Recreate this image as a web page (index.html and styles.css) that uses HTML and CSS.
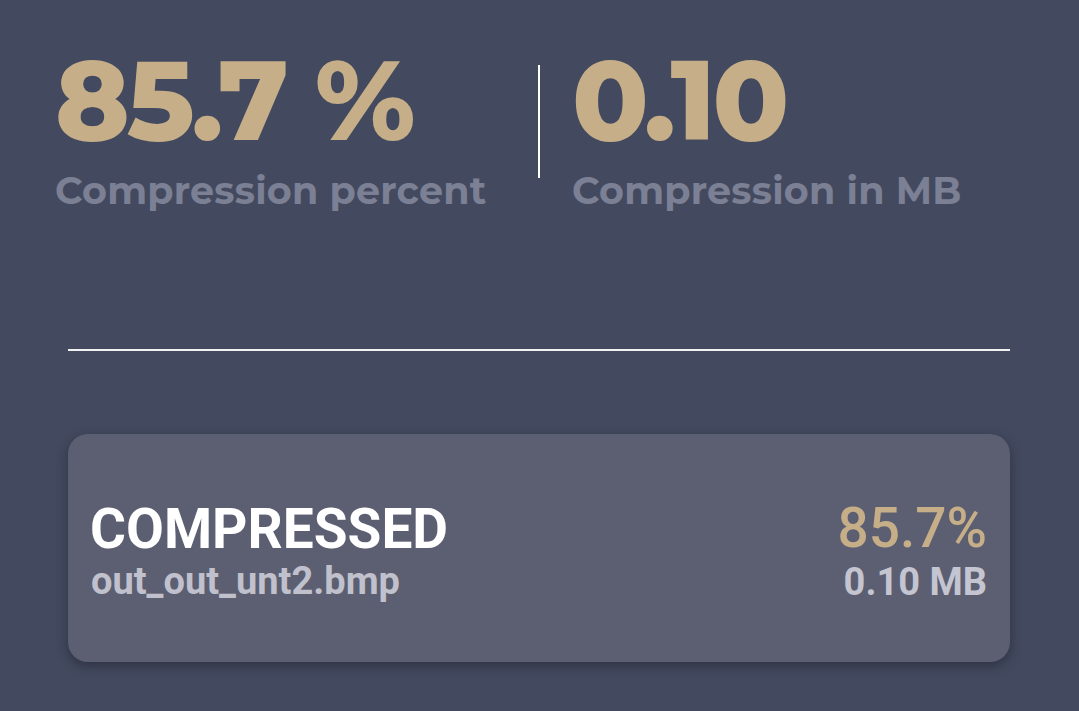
FILE: index.html
```html
<!DOCTYPE html>
<html lang="en">
<head>
<meta charset="utf-8">
<title>Compression result</title>
<link rel="stylesheet" href="styles.css">
</head>
<body>
<main class="page">
  <section class="stats">
    <div class="stat stat-first">
      <div class="stat-value">85.7 %</div>
      <div class="stat-label">Compression percent</div>
    </div>
    <div class="stat-divider"></div>
    <div class="stat stat-second">
      <div class="stat-value">0.10</div>
      <div class="stat-label">Compression in MB</div>
    </div>
  </section>
  <section class="results">
    <hr class="rule">
    <div class="card">
      <div class="card-left">
        <div class="card-title">COMPRESSED</div>
        <div class="card-file">out_out_unt2.bmp</div>
      </div>
      <div class="card-right">
        <div class="card-percent">85.7%</div>
        <div class="card-size">0.10 MB</div>
      </div>
    </div>
  </section>
</main>
</body>
</html>
```

FILE: styles.css
```css
html, body {
  margin: 0;
  padding: 0;
}
body {
  background: #434a5f;
  width: 1079px;
  height: 711px;
  overflow: hidden;
}
.page {
  display: flex;
  flex-direction: column;
}
.stats {
  display: flex;
  align-items: flex-start;
  padding: 42px 0 0 55px;
  font-family: "Montserrat", Inter, "Noto Sans", sans-serif;
}
.stat-first {
  width: 483px;
}
.stat-second {
  padding-left: 32px;
}
.stat-value {
  color: #c6ae88;
  font-size: 112px;
  font-weight: 800;
  line-height: 116px;
  letter-spacing: -3.2px;
}
.stat-label {
  color: #7c8094;
  font-size: 38px;
  font-weight: 700;
  line-height: 44px;
  letter-spacing: 0.25px;
  margin-top: 11px;
}
.stat-divider {
  width: 2px;
  height: 113px;
  margin-top: 23px;
  background: #ffffff;
}
.results {
  padding: 0 69px 0 68px;
  font-family: Roboto, "Liberation Sans", sans-serif;
}
.rule {
  border: 0;
  height: 2px;
  background: #f2f2f5;
  margin: 136px 0 0 0;
}
.card {
  margin-top: 83px;
  height: 228px;
  box-sizing: border-box;
  background: #5c5f71;
  border-radius: 20px;
  box-shadow: 0 4px 12px rgba(20, 22, 32, 0.45);
  padding: 0 23px 0 22px;
  display: flex;
  align-items: center;
  justify-content: space-between;
}
.card-left, .card-right {
  display: flex;
  flex-direction: column;
}
.card-right {
  align-items: flex-end;
}
.card-title {
  color: #ffffff;
  font-size: 55px;
  font-weight: 700;
  line-height: 66px;
}
.card-file {
  color: #c0c1cd;
  font-size: 38px;
  font-weight: 700;
  line-height: 38px;
  padding-left: 1px;
}
.card-percent {
  color: #c6ae88;
  font-size: 55px;
  font-weight: 500;
  line-height: 68px;
}
.card-size {
  color: #c4c5d1;
  font-size: 38px;
  font-weight: 700;
  line-height: 40px;
}
```
